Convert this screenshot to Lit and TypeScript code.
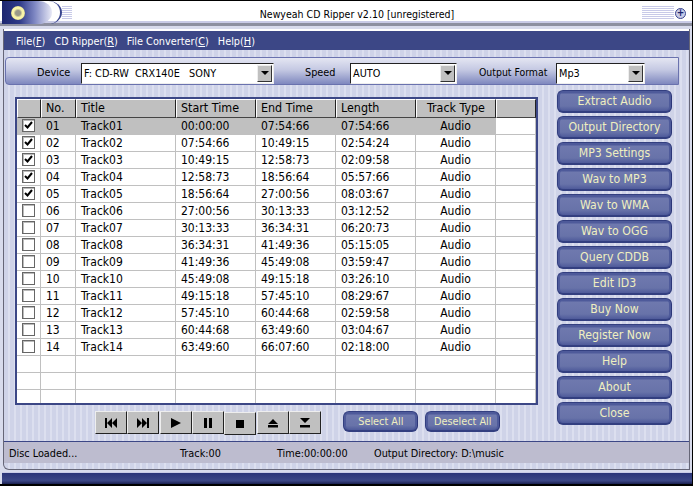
import { LitElement, html, css, svg } from "lit";
import { customElement } from "lit/decorators.js";

const TRACKS = [
  ["01","Track01","00:00:00","07:54:66","07:54:66",1],
  ["02","Track02","07:54:66","10:49:15","02:54:24",1],
  ["03","Track03","10:49:15","12:58:73","02:09:58",1],
  ["04","Track04","12:58:73","18:56:64","05:57:66",1],
  ["05","Track05","18:56:64","27:00:56","08:03:67",1],
  ["06","Track06","27:00:56","30:13:33","03:12:52",0],
  ["07","Track07","30:13:33","36:34:31","06:20:73",0],
  ["08","Track08","36:34:31","41:49:36","05:15:05",0],
  ["09","Track09","41:49:36","45:49:08","03:59:47",0],
  ["10","Track10","45:49:08","49:15:18","03:26:10",0],
  ["11","Track11","49:15:18","57:45:10","08:29:67",0],
  ["12","Track12","57:45:10","60:44:68","02:59:58",0],
  ["13","Track13","60:44:68","63:49:60","03:04:67",0],
  ["14","Track14","63:49:60","66:07:60","02:18:00",0],
] as const;

const SIDE = ["Extract Audio","Output Directory","MP3 Settings","Wav to MP3","Wav to WMA","Wav to OGG","Query CDDB","Edit ID3","Buy Now","Register Now","Help","About","Close"];

const ICONS = [
  svg`<path d="M1 0h2v10H1zM8 0v10L3 5zM13 0v10L8 5z"/>`,
  svg`<path d="M1 0v10l5-5zM6 0v10l5-5zM11 0h2v10h-2z"/>`,
  svg`<path d="M2 0l10 5-10 5z"/>`,
  svg`<path d="M3 0h3v10H3zM8 0h3v10H8z"/>`,
  svg`<path d="M3 1h8v8H3z"/>`,
  svg`<path d="M7 1l5 5H2zM2 7h10v2.5H2z"/>`,
  svg`<path d="M2 0h10L7 5zM2 7h10v2.5H2z"/>`,
];

@customElement("app-root")
export class AppRoot extends LitElement {
  static styles = css`
    :host { display: block; width: 693px; height: 486px; background: #000; overflow: hidden;
      font-family: "DejaVu Sans", Verdana, sans-serif; font-stretch: condensed; font-size: 10.8px; color: #000; }
    * { box-sizing: border-box; }
    .win { width: 692px; height: 483px; margin-top: 1px; display: flex; flex-direction: column; background: #d8dbec; }
    .title { height: 25px; flex: none; background: #fff; display: flex; align-items: center; position: relative;
      border-bottom: 3px solid #8d90a0; box-shadow: inset 0 -2px 0 #c9cbe6; }
    .orb { position: absolute; left: 2px; top: 0; width: 50px; height: 23px; border-radius: 0 14px 14px 0 / 0 12px 12px 0;
      background: linear-gradient(90deg, #1c2670 0%, #2e3a88 35%, #7d86c2 65%, #e8e9f6 100%); }
    .arc { position: absolute; left: 8px; top: 0; width: 54px; height: 23px; border-radius: 0 14px 14px 0 / 0 12px 12px 0;
      border-right: 2px solid #39458f; }
    .sun { position: absolute; left: 9px; top: 5px; width: 14px; height: 14px; border-radius: 50%;
      background: radial-gradient(circle, #9a9a88 0 25%, #f8f4a8 45% 62%, #a8a468 78%, #2e3a88 100%); }
    .hatch { position: absolute; top: 5px; height: 14px;
      background: repeating-linear-gradient(180deg, #c8cae8 0 1px, #fff 1px 2px); }
    .hatch.l { left: 62px; width: 10px; } .hatch.r { right: 18px; width: 32px; }
    .caption { flex: 1; text-align: center; font-size: 10.5px; padding: 3px 0 0 22px; }
    .plus { position: absolute; right: 6px; top: 7px; width: 11px; height: 11px; border-radius: 50%;
      background: #c9cde8; border: 1px solid #39458f; color: #1c2670; font-size: 10px; line-height: 8px; text-align: center; font-weight: bold; }
    .body { flex: 1; margin: 3px 2px 0 3px; display: flex; flex-direction: column; min-height: 0;
      border: 1px solid #667; border-top: 0; border-radius: 0 0 0 6px;
      background: repeating-linear-gradient(90deg, #cfd3e8 0 4px, #dcdfef 4px 6px); }
    .menu { height: 21px; flex: none; background: #3c4786; color: #fff; display: flex; gap: 9px; padding: 1px 0 0 12px; align-items: center;
      border-top: 2px solid #fff; }
    .menu u { text-decoration: underline; }
    .tools { height: 28px; flex: none; margin: 7px 10px 0 1px; padding-top: 4px; border: 1px solid #6a72ae; border-radius: 4px 0 0 4px;
      background: linear-gradient(180deg, #e4e6f2 0%, #c5c9e3 45%, #7f88bf 100%); display: flex; align-items: center; }
    .lab { flex: none; padding-bottom: 2px; white-space: nowrap; }
    .lab.a { margin-left: 31px; width: 44px; }
    .lab.b { margin-left: 31px; width: 45px; }
    .lab.c { margin-left: 22px; width: 77px; font-size: 10.4px; }
    .combo { height: 21px; background: #fff; border: 1px solid; border-color: #222 #eee #eee #222; display: flex; align-items: center; padding-left: 2px; justify-content: space-between; flex: none; }
    .combo.a { width: 193px; } .combo.b { width: 107px; } .combo.c { width: 89px; }
    .arrow { width: 15px; height: 17px; margin-right: 1px; background: #c0c0c0; border: 1px solid; border-color: #eee #333 #333 #eee; display: flex; align-items: center; justify-content: center; }
    .arrow::after { content: ""; border: 4px solid transparent; border-top: 4px solid #000; border-bottom: 0; }
    .mid { flex: 1; display: flex; min-height: 0; padding: 5px 0 0 11px; }
    .left { width: 523px; flex: none; display: flex; flex-direction: column; margin-top: 7px; }
    .table { height: 308px; flex: none; border: 2px solid #3c4786; background: #fff; overflow: hidden; font-size: 12px; }
    .tr { display: grid; grid-template-columns: 24px 35px 100px 80px 80px 80px 80px 40px; height: 17px; line-height: 16px; }
    .tr.head { height: 19px; background: #c0c0c0; font-size: 12.4px; }
    .th { border: 1px solid; border-color: #fff #222 #444 #fff; padding-left: 4px; line-height: 16px; white-space: nowrap; }
    .th.c { text-align: center; padding: 0; }
    .td { border-right: 1px solid #c0c0c0; border-bottom: 1px solid #c0c0c0; padding-left: 5px; white-space: nowrap; }
    .td.c { text-align: center; padding: 0; }
    .td.k { padding: 0; }
    .tr.sel .td:not(:last-child) { background: #c0c0c0; }
    .box { display: block; width: 13px; height: 13px; margin: 1px 0 0 5px; background: #fff; border: 1px solid #666; box-shadow: inset 1px 1px 0 #bbb; }
    .box svg { display: block; }
    .lower { display: flex; height: 39px; align-items: flex-start; padding: 6px 0 0 80px; }
    .trans { display: flex; }
    .tb { width: 32px; height: 23px; background: #c0c0c0; border: 1px solid; border-color: #eee #222 #222 #eee; display: flex; align-items: center; justify-content: center; margin-right: 0.33px; }
    .tb.down { margin-top: 1px; }
    .tb svg { width: 14px; height: 10px; overflow: visible; }
    .pill { flex: none; height: 21px; color: #efefc0; display: flex; align-items: center; justify-content: center; border-radius: 6px;
      background: linear-gradient(180deg, #4e5a9a 0 2px, #6f79ae 3px, #6873a9 75%, #4e5a9a 100%);
      border: 1px solid #333f80; border-right-color: #2c3678; border-bottom: 2px solid #333f80; white-space: nowrap;
      box-shadow: inset 2px 0 0 #4e5a9a, inset -2px 0 0 #4e5a9a; }
    .lower .pill { width: 75px; margin-left: 7px; }
    .lower .first { margin-left: 22px; }
    .side { width: 115px; margin-left: 19px; display: flex; flex-direction: column; gap: 3px; }
    .side .pill { height: 23px; font-size: 12.2px; }
    .status { height: 22px; flex: none; background: #bdbccf; border-top: 1px solid #3c4786; padding-top: 2px; line-height: 19px; display: flex; }
    .status span { white-space: nowrap; }
    .s1 { margin-left: 5px; width: 171px; } .s2, .s3 { width: 97px; }
    .foot { height: 6px; flex: none; }
    .bar { height: 12px; flex: none; margin: 2px 0 0 2px; border-top: 1px solid #c9cbe6; background: linear-gradient(180deg, #2a3478, #3c4786 70%, #1a2050); }
  `;

  render() {
    return html`<div class="win">
      <div class="title">
        <div class="orb"><div class="sun"></div></div><div class="arc"></div><div class="hatch l"></div>
        <div class="caption">Newyeah CD Ripper v2.10 [unregistered]</div>
        <div class="hatch r"></div><div class="plus">+</div>
      </div>
      <div class="body">
        <div class="menu">
          <span>File(<u>F</u>)</span><span>CD Ripper(<u>R</u>)</span><span>File Converter(<u>C</u>)</span><span>Help(<u>H</u>)</span>
        </div>
        <div class="tools">
          <span class="lab a">Device</span>
          <div class="combo a"><span>F: CD-RW&nbsp; CRX140E&nbsp;&nbsp; SONY</span><span class="arrow"></span></div>
          <span class="lab b">Speed</span>
          <div class="combo b"><span>AUTO</span><span class="arrow"></span></div>
          <span class="lab c">Output Format</span>
          <div class="combo c"><span>Mp3</span><span class="arrow"></span></div>
        </div>
        <div class="mid">
          <div class="left">
            <div class="table">
              <div class="tr head">
                ${["","No.","Title","Start Time","End Time","Length","Track Type",""].map(h => html`<div class="th ${h === "Track Type" ? "c" : ""}">${h}</div>`)}
              </div>
              ${Array.from({ length: 17 }, (_, i) => {
                const t = TRACKS[i];
                if (!t) return html`<div class="tr">${Array.from({ length: 8 }, () => html`<div class="td"></div>`)}</div>`;
                return html`<div class="tr ${i === 0 ? "sel" : ""}">
                  <div class="td k"><span class="box">${t[5] ? html`<svg width="11" height="11" viewBox="0 0 11 11"><path d="M2 5l2.5 2.5L9 2" fill="none" stroke="#000" stroke-width="2"/></svg>` : ""}</span></div>
                  <div class="td">${t[0]}</div><div class="td">${t[1]}</div><div class="td">${t[2]}</div>
                  <div class="td">${t[3]}</div><div class="td">${t[4]}</div><div class="td c">Audio</div><div class="td"></div>
                </div>`;
              })}
            </div>
            <div class="lower">
              <div class="trans">
                ${ICONS.map((ic, i) => html`<div class="tb ${i === 4 ? "down" : ""}"><svg viewBox="0 0 14 10">${ic}</svg></div>`)}
              </div>
              <div class="pill first">Select All</div><div class="pill">Deselect All</div>
            </div>
          </div>
          <div class="side">${SIDE.map(s => html`<div class="pill">${s}</div>`)}</div>
        </div>
        <div class="status">
          <span class="s1">Disc Loaded...</span>
          <span class="s2">Track:00</span>
          <span class="s3">Time:00:00:00</span>
          <span>Output Directory: D:\\music</span>
        </div>
        <div class="foot"></div>
      </div>
      <div class="bar"></div>
    </div>`;
  }
}
